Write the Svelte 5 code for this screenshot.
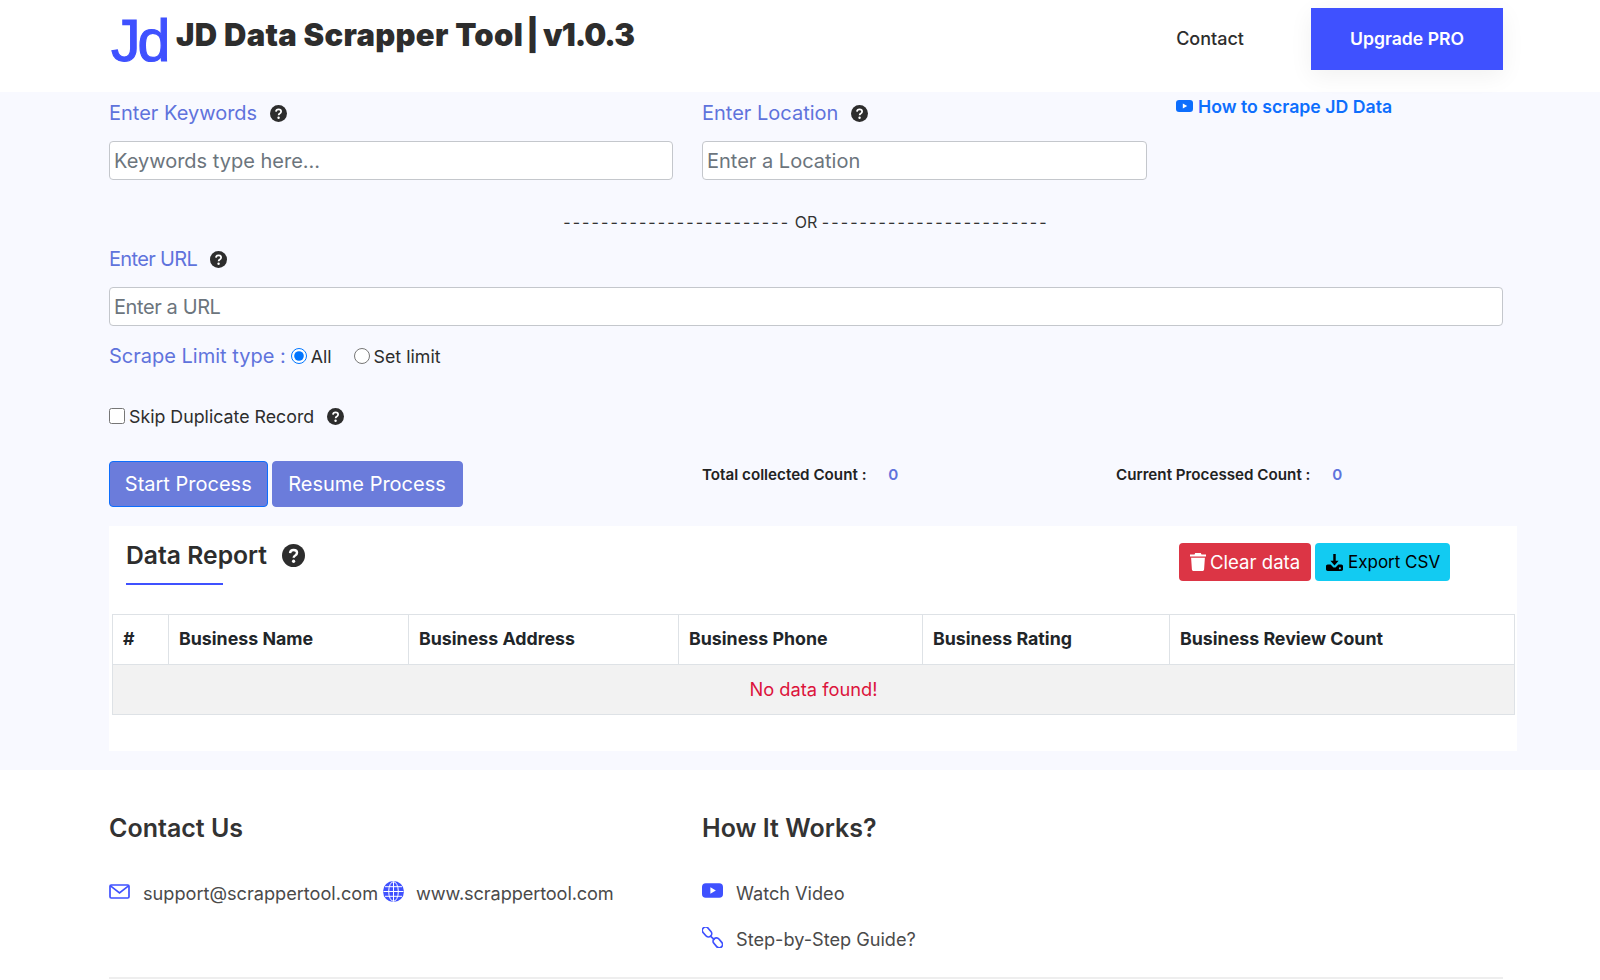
<script>
    let limitType = "all";
    let skipDuplicates = false;
    let totalCount = 0;
    let processedCount = 0;

    const columns = [
        { label: "#", width: 56 },
        { label: "Business Name", width: 240 },
        { label: "Business Address", width: 270 },
        { label: "Business Phone", width: 244 },
        { label: "Business Rating", width: 247 },
        { label: "Business Review Count", width: 345 },
    ];
</script>

{#snippet help(size)}
    <svg class="help" width={size} height={size} viewBox="0 0 24 24" aria-hidden="true">
        <circle cx="12" cy="12" r="12" fill="#2d2d2d" />
        <path d="M8.400 9.400c.2-2 1.700-3.200 3.700-3.200s3.600 1.200 3.600 3c0 1.400-.8 2.100-1.900 2.800-1 .6-1.600 1.100-1.600 2.300" fill="none" stroke="#fff" stroke-width="2.500" />
        <circle cx="12.100" cy="18" r="1.700" fill="#fff" />
    </svg>
{/snippet}

{#snippet youtube(color, w, h)}
    <svg width={w} height={h} viewBox="0 0 20 14" aria-hidden="true">
        <rect width="20" height="14" rx="3.600" fill={color} />
        <path d="M8 4l5.200 3L8 10z" fill="#fff" />
    </svg>
{/snippet}

<header class="topbar">
    <span class="logo">Jd</span>
    <h1 class="title">JD Data Scrapper Tool<span class="pipe">|</span><span class="version">v1.0.3</span></h1>
    <nav class="nav">
        <a class="contact" href="#contact">Contact</a>
        <a class="upgrade" href="#pro">Upgrade PRO</a>
    </nav>
</header>

<main class="main">
    <div class="form">
        <div class="row-top">
            <div>
                <label class="field-label" for="keywords">Enter Keywords {@render help(17)}</label>
                <input id="keywords" class="text-input" placeholder="Keywords type here..." />
            </div>
            <div>
                <label class="field-label" for="location">Enter Location {@render help(17)}</label>
                <input id="location" class="text-input" placeholder="Enter a Location" />
            </div>
            <a class="howto" href="#video">
                {@render youtube("#0d6efd", 17, 12)}
                How to scrape JD Data
            </a>
        </div>

        <div class="or"><span class="dashes">------------------------</span> OR <span class="dashes">------------------------</span></div>

        <label class="field-label url-label" for="url"><span>Enter URL</span> {@render help(17)}</label>
        <input id="url" class="text-input url-input" placeholder="Enter a URL" />

        <div class="limit">
            <span class="limit-title">Scrape Limit type :</span>
            <label class="radio first"><input type="radio" bind:group={limitType} value="all" /> All</label>
            <label class="radio"><input type="radio" bind:group={limitType} value="set" /> Set limit</label>
        </div>

        <div class="skip">
            <label class="skip-label"><input type="checkbox" bind:checked={skipDuplicates} /> Skip Duplicate Record</label>
            {@render help(17)}
        </div>

        <div class="actions">
            <div class="action-buttons">
                <button class="btn-process start">Start Process</button>
                <button class="btn-process resume">Resume Process</button>
            </div>
            <div class="count">Total collected Count : <b>{totalCount}</b></div>
            <div class="count">Current Processed Count : <b>{processedCount}</b></div>
        </div>
    </div>

    <section class="report">
        <div class="report-head">
            <div>
                <h2 class="report-title">Data Report {@render help(23)}</h2>
                <div class="underline"></div>
            </div>
            <div class="report-buttons">
                <button class="btn-small clear">
                    <svg width="16" height="18" viewBox="0 0 16 18" aria-hidden="true">
                        <path fill="#fff" d="M5.200 0h5.600l.7 1.400H16v2.200H0V1.400h4.500zM1.100 4.700h13.800l-.8 11.800c-.1.900-.8 1.500-1.600 1.500H3.500c-.8 0-1.500-.6-1.600-1.500z" />
                    </svg>
                    Clear data
                </button>
                <button class="btn-small export">
                    <svg width="17" height="17" viewBox="0 0 18 18" aria-hidden="true">
                        <path fill="#000" d="M7.700 0h2.600v7.200h3l-4.300 5-4.300-5h3z" />
                        <path fill="#000" d="M1.800 11h3.100l3 3.200h2.200l3-3.200h3.100c1 0 1.800.8 1.800 1.800v3.400c0 1-.8 1.800-1.800 1.800H1.800C.8 18 0 17.200 0 16.200v-3.400C0 11.800.8 11 1.800 11z" />
                        <circle cx="14.700" cy="15.200" r="1.100" fill="#12cbf2" />
                    </svg>
                    Export CSV
                </button>
            </div>
        </div>

        <table class="data-table">
            <colgroup>
                {#each columns as col}
                    <col style="width: {col.width}px" />
                {/each}
            </colgroup>
            <thead>
                <tr>
                    {#each columns as col}
                        <th>{col.label}</th>
                    {/each}
                </tr>
            </thead>
            <tbody>
                <tr>
                    <td colspan={columns.length}>No data found!</td>
                </tr>
            </tbody>
        </table>
    </section>
</main>

<footer class="footer" id="contact">
    <div class="footer-cols">
        <div>
            <h3>Contact Us</h3>
            <div class="foot-row">
                <svg class="foot-icon" width="21" height="15" viewBox="0 0 21 15" aria-hidden="true">
                    <rect x="1" y="1" width="19" height="13" rx="1.200" fill="none" stroke="#3f51ff" stroke-width="1.700" />
                    <path d="M1.500 1.800l9 7 9-7" fill="none" stroke="#3f51ff" stroke-width="1.700" />
                </svg>
                <span class="foot-text">support@scrappertool.com</span>
                <svg class="globe" width="21" height="21" viewBox="0 0 21 21" aria-hidden="true">
                    <circle cx="10.500" cy="10.500" r="10.500" fill="#3f51ff" />
                    <g fill="none" stroke="#fff" stroke-width="1">
                        <ellipse cx="10.500" cy="10.500" rx="4.800" ry="9.800" />
                        <path d="M10.500 .5v20M.5 10.500h20M2 5.700h17M2 15.300h17" />
                    </g>
                </svg>
                <span class="foot-text site">www.scrappertool.com</span>
            </div>
        </div>
        <div>
            <h3>How It Works?</h3>
            <div class="foot-row">
                <span class="foot-icon">{@render youtube("#3f51ff", 21, 15)}</span>
                <span class="foot-text">Watch Video</span>
            </div>
            <div class="foot-row guide">
                <svg class="foot-icon" width="21" height="21" viewBox="0 0 21 21" aria-hidden="true">
                    <g fill="none" stroke="#3f51ff" stroke-width="1.700">
                        <rect x="-5.500" y="-3.300" width="11" height="6.600" rx="3.300" transform="translate(5 5) rotate(50)" />
                        <rect x="-5.500" y="-3.300" width="11" height="6.600" rx="3.300" transform="translate(15.800 15.800) rotate(50)" />
                        <path d="M8.200 8.800l4.400 4" />
                    </g>
                </svg>
                <span class="foot-text">Step-by-Step Guide?</span>
            </div>
        </div>
    </div>
    <div class="foot-line"></div>
</footer>

<style>
    :global(body) {
        background: #fff;
        color: #2d2d2d;
        font-family: Inter, "Noto Sans", sans-serif;
    }

    a {
        text-decoration: none;
    }

    .topbar {
        height: 92px;
        display: flex;
        align-items: flex-start;
        padding: 0 97px 0 111px;
        box-sizing: border-box;
    }

    .logo {
        font-family: "Liberation Sans", Arial, sans-serif;
        font-size: 59px;
        line-height: 82px;
        letter-spacing: -3px;
        color: #3f51ff;
        -webkit-text-stroke: 1.200px #3f51ff;
        width: 65px;
        flex: none;
    }

    .title {
        margin: 14px 0 0;
        font-size: 31px;
        line-height: 42px;
        font-weight: 900;
        letter-spacing: 0.300px;
        color: #2d2d2d;
        white-space: nowrap;
    }

    .pipe {
        margin: 0 4px 0 3px;
    }

    .version {
        letter-spacing: -1px;
    }

    .nav {
        margin-left: auto;
        display: flex;
        align-items: center;
        padding-top: 8px;
    }

    .contact {
        color: #2d2d2d;
        font-size: 18px;
        font-weight: 500;
        margin-right: 67px;
        padding-bottom: 2px;
    }

    .upgrade {
        width: 192px;
        height: 62px;
        box-sizing: border-box;
        padding-bottom: 2px;
        display: flex;
        align-items: center;
        justify-content: center;
        background: #3f51ff;
        color: #fff;
        font-size: 17.600px;
        font-weight: 600;
        box-shadow: 0 6px 24px rgba(0, 0, 0, 0.06);
    }

    .main {
        background: #f8f9ff;
        height: 678px;
        padding: 6px 83px 0 109px;
        box-sizing: border-box;
    }

    .form {
        padding-right: 14px;
    }

    .row-top {
        display: grid;
        grid-template-columns: 564px 445px 1fr;
        column-gap: 29px;
    }

    .field-label {
        display: flex;
        align-items: center;
        gap: 13px;
        height: 30px;
        margin-bottom: 13px;
        font-size: 20px;
        color: #5f73dc;
    }

    .text-input {
        display: block;
        width: 100%;
        height: 39px;
        box-sizing: border-box;
        padding: 0 4px;
        background: #fff;
        border: 1px solid #c4c7cc;
        border-radius: 4px;
        font-family: inherit;
        font-size: 20px;
        outline: none;
    }

    .text-input::placeholder {
        color: #6c757d;
    }

    .url-input {
        letter-spacing: -0.400px;
    }

    .howto {
        display: flex;
        align-items: center;
        align-self: start;
        gap: 5px;
        color: #0d6efd;
        font-size: 17.700px;
        font-weight: 600;
        height: 16px;
    }

    .or {
        margin-top: 30px;
        height: 24px;
        line-height: 24px;
        text-align: center;
        font-size: 16px;
        color: #333;
    }

    .dashes {
        letter-spacing: 2.100px;
    }

    .url-label {
        margin-top: 10px;
    }

    .url-label span {
        letter-spacing: -0.650px;
    }

    .limit {
        display: flex;
        align-items: center;
        height: 30px;
        margin-top: 15px;
    }

    .limit-title {
        font-size: 20px;
        color: #5f73dc;
    }

    .radio {
        display: flex;
        align-items: center;
        gap: 4px;
        margin-right: 22px;
        font-size: 17.800px;
        padding-top: 1px;
    }

    .radio.first {
        margin-left: 5px;
    }

    .radio input,
    .skip input {
        width: 16px;
        height: 16px;
        margin: -2px 0 0;
    }

    .skip {
        display: flex;
        align-items: center;
        gap: 13px;
        height: 30px;
        margin-top: 30px;
    }

    .skip-label {
        display: flex;
        align-items: center;
        gap: 4px;
        font-size: 17.800px;
        padding-top: 1px;
    }

    .actions {
        display: grid;
        grid-template-columns: 593px 414px 1fr;
        align-items: start;
        margin-top: 30px;
    }

    .action-buttons {
        display: flex;
        gap: 4px;
    }

    .btn-process {
        height: 46px;
        padding: 0;
        background: #6b7cdb;
        border: 1px solid #6b7cdb;
        border-radius: 4px;
        color: #fff;
        font-family: inherit;
        font-size: 20px;
    }

    .start {
        width: 158.500px;
        border-color: #0d6efd;
    }

    .resume {
        width: 191px;
    }

    .count {
        font-size: 15.200px;
        line-height: 20px;
        font-weight: 600;
        color: #222;
        margin-top: 4px;
    }

    .count b {
        color: #5f73dc;
        margin-left: 18px;
        font-weight: 600;
    }

    .report {
        margin-top: 19px;
        background: #fff;
        height: 225px;
        padding: 0 3px;
    }

    .report-head {
        height: 88px;
        display: flex;
        justify-content: space-between;
        padding: 0 64px 0 14px;
        box-sizing: border-box;
    }

    .report-title {
        display: flex;
        align-items: center;
        gap: 15px;
        margin: 12px 0 0;
        height: 34px;
        font-size: 24.700px;
        font-weight: 600;
        color: #2d2d2d;
    }

    .underline {
        width: 97px;
        height: 2px;
        margin-top: 11px;
        background: #3f51ff;
    }

    .report-buttons {
        display: flex;
        gap: 4px;
        margin-top: 17px;
    }

    .btn-small {
        height: 38px;
        display: flex;
        align-items: center;
        gap: 4px;
        padding: 0 0 0 11px;
        border: 0;
        border-radius: 4px;
        font-family: inherit;
        font-size: 18.600px;
        white-space: nowrap;
    }

    .clear {
        width: 132px;
        background: #dc3545;
        color: #fff;
    }

    .export {
        width: 135px;
        background: #12cbf2;
        color: #000;
        font-size: 17px;
        gap: 5px;
    }

    .data-table {
        width: 1402px;
        table-layout: fixed;
        border-collapse: collapse;
    }

    .data-table th,
    .data-table td {
        height: 50px;
        box-sizing: border-box;
        padding: 0 10px 2px;
        border: 1px solid #dee2e6;
    }

    .data-table th {
        text-align: left;
        font-size: 17.800px;
        font-weight: 700;
        color: #212529;
    }

    .data-table td {
        text-align: center;
        background: #f2f2f2;
        color: #dc143c;
        font-size: 18.300px;
    }

    .footer {
        padding: 0 97px 0 109px;
    }

    .footer-cols {
        display: grid;
        grid-template-columns: 564px 1fr;
        column-gap: 29px;
        height: 207px;
    }

    .footer h3 {
        margin: 40px 0 0;
        height: 36px;
        line-height: 36px;
        font-size: 25px;
        font-weight: 600;
        color: #333;
    }

    .foot-row {
        display: flex;
        align-items: center;
        height: 30px;
        margin-top: 32px;
    }

    .foot-row.guide {
        margin-top: 16px;
    }

    .foot-icon {
        display: block;
        width: 21px;
        margin-right: 13px;
        margin-top: -3px;
        flex: none;
    }

    .globe {
        margin: -3px 12px 0 5px;
        flex: none;
    }

    .foot-text {
        font-size: 18.150px;
        color: #4a4a4a;
        white-space: nowrap;
    }

    .site {
        letter-spacing: -0.100px;
    }

    .foot-line {
        height: 2px;
        background: #eee;
    }

    .help {
        flex: none;
        display: block;
    }
</style>
